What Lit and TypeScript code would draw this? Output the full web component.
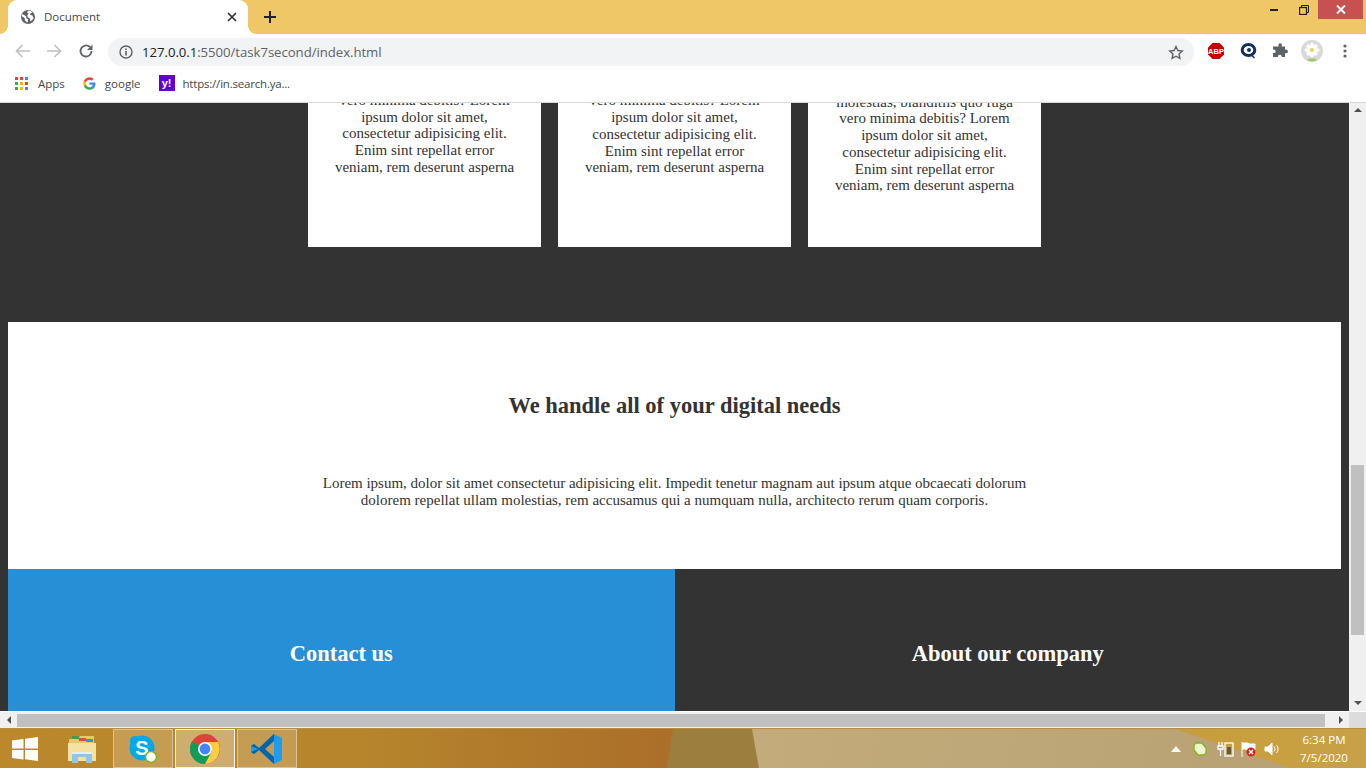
import { LitElement, html, css, svg } from "lit";
import { customElement } from "lit/decorators.js";

const globe = html`<svg width="16" height="16" viewBox="0 0 16 16"><circle cx="8" cy="8" r="7" fill="#5f6368"/><path d="M2.5 5 6 7.2l.6 2.3 1.6 1-.8 3.2L5 11.5 4.6 9 1.5 7zM8 1.5l2.6.4 2 1.7-1.8.6-1 1.6 2.6.6 1.2 2.8-1.8 2.4-1.5.6-.2-2.4-2.2-1.4-.6-2.2 1.4-1.6-1.6-.9z" fill="#fff"/></svg>`;
const googleG = html`<svg width="13" height="13" viewBox="0 0 24 24"><path fill="#4285f4" d="M23 12.3c0-.8-.1-1.600-.2-2.300H12v4.500h6.200c-.3 1.400-1.100 2.600-2.300 3.400v2.900h3.700c2.200-2 3.400-5 3.400-8.500z"/><path fill="#34a853" d="M12 23.500c3.100 0 5.700-1 7.600-2.800l-3.700-2.900c-1 .7-2.300 1.100-3.900 1.100-3 0-5.500-2-6.400-4.800H1.800v3A11.500 11.500 0 0 0 12 23.500z"/><path fill="#fbbc05" d="M5.600 14.100a6.900 6.900 0 0 1 0-4.300v-3H1.800a11.500 11.500 0 0 0 0 10.300z"/><path fill="#ea4335" d="M12 5c1.700 0 3.200.6 4.400 1.700l3.300-3.300A11.500 11.500 0 0 0 1.800 6.800l3.800 3C6.500 7 9 5 12 5z"/></svg>`;
const appsGrid = html`<svg width="13" height="13" viewBox="0 0 13 13">${[
  ["#ea4335", "#ea4335", "#4285f4"],
  ["#34a853", "#fbbc05", "#ea4335"],
  ["#34a853", "#fbbc05", "#4285f4"],
].map((row, y) => row.map((c, x) => svg`<rect x="${x * 5}" y="${y * 5}" width="3" height="3" fill="${c}"/>`))}</svg>`;

@customElement("app-root")
export class AppRoot extends LitElement {
  static styles = css`
    :host { display: block; width: 1366px; height: 768px; overflow: hidden; position: relative; }
    .win { display: flex; flex-direction: column; height: 768px; font-family: "Open Sans", "Noto Sans", sans-serif; }

    .titlebar { height: 34px; background: #f0c766; display: flex; align-items: flex-start; flex: none; }
    .tab { margin-left: 8px; width: 240px; height: 34px; background: #fff; border-radius: 9px 9px 0 0; display: flex; align-items: center; box-sizing: border-box; padding: 0 11px 0 12px; position: relative; }
    .tab::before, .tab::after { content: ""; position: absolute; bottom: 0; width: 8px; height: 8px; }
    .tab::before { left: -8px; background: radial-gradient(circle at 0 0, transparent 7.5px, #fff 8px); }
    .tab::after { right: -8px; background: radial-gradient(circle at 100% 0, transparent 7.5px, #fff 8px); }
    .tab-title { margin: -1px 0 0 8px; font-size: 11.5px; color: #45474a; flex: 1; }
    .plus { margin-left: 15px; margin-top: 10px; display: flex; }
    .spacer { flex: 1; }
    .winbtns { display: flex; height: 19px; margin-right: 3px; }
    .winbtn { width: 45px; height: 19px; display: flex; align-items: center; justify-content: center; }
    .winbtn.close { width: 45px; background: #c75050; }
    .winbtns .narrow { width: 29px; }

    .toolbar { height: 34px; background: #fff; display: flex; align-items: center; flex: none; padding-left: 15px; }
    .nav { display: flex; width: 32px; }
    .nav.fwd { width: 31px; }
    .reload { flex: none; }
    .omni { margin-left: 14px; margin-top: 2px; width: 1086px; height: 28px; border-radius: 14px; background: #f1f3f4; display: flex; align-items: center; box-sizing: border-box; padding: 0 10px 0 11px; }
    .url { margin-left: 9px; font-size: 13.2px; color: #5f6368; flex: 1; letter-spacing: -0.05px; }
    .url b { font-weight: 400; color: #202124; }
    .ext { display: flex; align-items: center; margin-left: 13px; }
    .ext > * { flex: none; }
    .abp { margin-right: 15px; }
    .q { margin-right: 14px; }
    .puzzle { margin-right: 13px; }
    .avatar { margin-right: 20px; }

    .bookmarks { background: #fff; border-bottom: 1px solid #d9d9d9; display: flex; align-items: center; flex: none; padding: 0 0 4px 15px; height: 30px; font-size: 11.5px; color: #45474a; }
    .bm { display: flex; align-items: center; }
    .bm span { margin-left: 10px; }
    .bm.g { margin-left: 18px; }
    .bm.g span { margin-left: 9px; }
    .bm.yh { margin-left: 18px; }
    .y { width: 16px; height: 16px; background: #6001d2; color: #fff; font: bold 11px "Liberation Sans", sans-serif; display: flex; align-items: center; justify-content: center; }
    .bm .y-label { margin-left: 8px; letter-spacing: -0.2px; }

    .view { flex: 1; min-height: 0; display: flex; }
    .page { flex: 1; min-width: 0; overflow: hidden; background: #333; font-family: "Liberation Serif", "Times New Roman", serif; color: #333; }
    .cards { display: flex; justify-content: center; gap: 17px; margin-top: -100px; }
    .card { width: 233px; height: 244px; background: #fff; box-sizing: border-box; padding: 0 24px; overflow: hidden; text-align: center; font-size: 15px; line-height: 16.75px; }
    .card p { margin: 0; padding-top: 72px; }
    .card.mid p { padding-top: 72.5px; }
    .card.tall p { padding-top: 90.5px; }
    .digital { margin: 75px 8px 0; width: 1333px; height: 247px; background: #fff; box-sizing: border-box; text-align: center; padding-top: 71px; }
    h2 { margin: 0; font-size: 22.5px; font-weight: 700; line-height: 26px; }
    .digital p { margin: 56px auto 0; width: 740px; font-size: 15px; line-height: 16.75px; }
    .split { display: flex; margin-left: 8px; width: 1333px; height: 142px; }
    .split > div { flex: 1; text-align: center; color: #fff; padding-top: 72px; }
    .blue { background: #268fd5; }
    .split h2 { color: #fff; }

    .vscroll { width: 17px; background: #f0f0f0; flex: none; display: flex; flex-direction: column; align-items: center; position: relative; }
    .vthumb { position: absolute; top: 362px; left: 2px; width: 13px; height: 170px; background: #c0c0c0; }
    .arrow-up { margin-top: 5px; width: 0; height: 0; border: 4px solid transparent; border-top: 0; border-bottom: 4px solid #505050; }
    .arrow-down { margin-top: auto; margin-bottom: 6px; width: 0; height: 0; border: 4px solid transparent; border-bottom: 0; border-top: 4px solid #505050; }

    .hscroll { height: 17px; flex: none; background: #f0f0f0; display: flex; align-items: center; border-top: 1px solid #fff; box-sizing: border-box; }
    .hbtn { width: 17px; display: flex; justify-content: center; }
    .arrow-left { width: 0; height: 0; border: 4px solid transparent; border-left: 0; border-right: 4px solid #505050; }
    .arrow-right { width: 0; height: 0; border: 4px solid transparent; border-right: 0; border-left: 4px solid #505050; }
    .hthumb { width: 1308px; height: 13px; background: #c0c0c0; }
    .hgap { width: 7px; }
    .corner { margin-left: auto; width: 17px; height: 16px; background: #dcdcdc; }

    .taskbar { height: 40px; flex: none; display: flex; align-items: stretch; border-top: 1px solid #b78f3c; box-sizing: border-box; position: relative; color: #fff;
      background: linear-gradient(90deg, #bb882c 0, #b6862c 350px, #ac6f2a 665px, #b98a33 900px, #c9a040 1250px, #c7a048 1366px);
    }
    .taskbar::before { content: ""; position: absolute; inset: 0; background: #9c7f3f; clip-path: polygon(673px 0, 753px 0, 760px 100%, 667px 100%); }
    .taskbar::after { content: ""; position: absolute; inset: 0; background: linear-gradient(100deg, #c3ab7b 752px, #b9a375 1200px); clip-path: polygon(752px 0, 1175px 0, 1290px 100%, 759px 100%); }
    .taskbar > * { position: relative; z-index: 1; }
    .start { width: 50px; display: flex; align-items: center; justify-content: center; }
    .folder { width: 63px; display: flex; align-items: center; justify-content: center; }
    .tb { width: 60px; margin-right: 2px; box-sizing: border-box; border: 1px solid rgba(255,255,255,0.4); background: rgba(255,255,255,0.18); display: flex; align-items: center; justify-content: center; }
    .tb.active { border-color: rgba(255,255,255,0.85); background: rgba(255,255,255,0.32); }
    .tray { margin-left: auto; display: flex; align-items: center; }
    .tray > svg { flex: none; }
    .t-up { margin-right: 12px; }
    .t-leaf { margin-right: 10px; }
    .t-pow { margin-right: 6px; }
    .t-flag { margin-right: 7px; }
    .clock { width: 64px; margin-left: 12px; margin-right: 10px; text-align: center; font-size: 11.5px; line-height: 18px; color: #fff; }
  `;

  render() {
    const t = "molestias, blanditiis quo fuga vero minima debitis? Lorem ipsum dolor sit amet, consectetur adipisicing elit. Enim sint repellat error veniam, rem deserunt asperna";
    return html`
      <div class="win">
        <div class="titlebar">
          <div class="tab">
            ${globe}
            <div class="tab-title">Document</div>
            <svg width="10" height="10" viewBox="0 0 10 10"><path d="M1 1l8 8M9 1l-8 8" stroke="#333" stroke-width="1.700"/></svg>
          </div>
          <div class="plus"><svg width="14" height="14" viewBox="0 0 14 14"><path d="M7 1v12M1 7h12" stroke="#202124" stroke-width="2"/></svg></div>
          <div class="spacer"></div>
          <div class="winbtns">
            <div class="winbtn narrow"><svg width="9" height="4" viewBox="0 0 9 4"><rect y="1" width="8" height="2" fill="#222"/></svg></div>
            <div class="winbtn narrow"><svg width="10" height="10" viewBox="0 0 10 10" fill="none" stroke="#222"><rect x="0.500" y="2.500" width="7" height="7" stroke-width="1.300"/><path d="M2.500 2V.500h7v7H8"/></svg></div>
            <div class="winbtn close"><svg width="10" height="9" viewBox="0 0 10 9"><path d="M1 .5l8 8M9 .5l-8 8" stroke="#fff" stroke-width="2"/></svg></div>
          </div>
        </div>

        <div class="toolbar">
          <div class="nav"><svg width="15" height="14" viewBox="0 0 15 14" fill="none" stroke="#bfc1c3" stroke-width="1.700"><path d="M15 7H1.500M7.500 1 1.500 7l6 6"/></svg></div>
          <div class="nav fwd"><svg width="15" height="14" viewBox="0 0 15 14" fill="none" stroke="#bfc1c3" stroke-width="1.700"><path d="M0 7h13.500M7.500 1l6 6-6 6"/></svg></div>
          <svg class="reload" width="16" height="16" viewBox="0 0 16 16"><path d="M13.500 8a5.500 5.500 0 1 1-1.600-3.900" fill="none" stroke="#5f6368" stroke-width="1.800"/><path d="M14.500 1.500v5.500H9z" fill="#5f6368"/></svg>
          <div class="omni">
            <svg width="14" height="14" viewBox="0 0 14 14"><circle cx="7" cy="7" r="6" fill="none" stroke="#5f6368" stroke-width="1.400"/><rect x="6.200" y="6" width="1.600" height="4.500" fill="#5f6368"/><rect x="6.200" y="3.500" width="1.600" height="1.600" fill="#5f6368"/></svg>
            <div class="url"><b>127.0.0.1</b>:5500/task7second/index.html</div>
            <svg width="16" height="15" viewBox="0 0 16 15"><path d="M8 1.500l1.900 4 4.400.5-3.300 3 .9 4.400L8 11.200l-3.900 2.200.9-4.400-3.300-3 4.400-.5z" fill="none" stroke="#5f6368" stroke-width="1.400"/></svg>
          </div>
          <div class="ext">
            <svg class="abp" width="18" height="18" viewBox="0 0 18 18"><path d="M5.500 1h7L17 5.500v7L12.500 17h-7L1 12.500v-7z" fill="#c80000"/><text x="9" y="11.800" text-anchor="middle" font-family="Liberation Sans" font-weight="700" font-size="7.500" fill="#fff">ABP</text></svg>
            <svg class="q" width="18" height="18" viewBox="0 0 18 18"><ellipse cx="8.500" cy="8" rx="6.300" ry="5.500" fill="none" stroke="#14305e" stroke-width="3"/><circle cx="9" cy="8" r="2" fill="#14305e"/><path d="M12 13.500l2.500 2.500" stroke="#14305e" stroke-width="1.500"/></svg>
            <svg class="puzzle" width="16" height="16" viewBox="0 0 16 16"><path d="M6.500 1.500a1.700 1.700 0 0 1 3.300 0V3.500h3.200v3h1a1.900 1.900 0 0 1 0 3.800h-1V14H9.600v-1a1.900 1.900 0 0 0-3.600 0v1H1v-3.900h1.200a1.900 1.900 0 0 0 0-3.700H1V3.500h5.500z" fill="#5f6368"/></svg>
            <svg class="avatar" width="22" height="22" viewBox="0 0 22 22"><circle cx="11" cy="11" r="11" fill="#d9d9d9"/><g fill="#fff"><ellipse cx="11" cy="6" rx="2" ry="3.500"/><ellipse cx="11" cy="14" rx="2" ry="3.500"/><ellipse cx="7" cy="10" rx="3.500" ry="2"/><ellipse cx="15" cy="10" rx="3.500" ry="2"/><ellipse cx="8" cy="7" rx="2" ry="3" transform="rotate(-45 8 7)"/><ellipse cx="14" cy="7" rx="2" ry="3" transform="rotate(45 14 7)"/><ellipse cx="8" cy="13" rx="2" ry="3" transform="rotate(45 8 13)"/><ellipse cx="14" cy="13" rx="2" ry="3" transform="rotate(-45 14 13)"/></g><circle cx="11" cy="10" r="2" fill="#f2cf5a"/><path d="M6 20c2-2 8-2 10 0a11 11 0 0 1-10 0z" fill="#9cc46a"/></svg>
            <svg width="4" height="14" viewBox="0 0 4 14" fill="#5f6368"><circle cx="2" cy="2" r="1.600"/><circle cx="2" cy="7" r="1.600"/><circle cx="2" cy="12" r="1.600"/></svg>
          </div>
        </div>

        <div class="bookmarks">
          <div class="bm">${appsGrid}<span>Apps</span></div>
          <div class="bm g">${googleG}<span>google</span></div>
          <div class="bm yh"><div class="y">y!</div><span class="y-label">https://in.search.ya...</span></div>
        </div>

        <div class="view">
          <div class="page">
            <div class="cards">
              <div class="card"><p>${t}</p></div>
              <div class="card mid"><p>${t}</p></div>
              <div class="card tall"><p>${t}</p></div>
            </div>
            <div class="digital">
              <h2>We handle all of your digital needs</h2>
              <p>Lorem ipsum, dolor sit amet consectetur adipisicing elit. Impedit tenetur magnam aut ipsum atque obcaecati dolorum dolorem repellat ullam molestias, rem accusamus qui a numquam nulla, architecto rerum quam corporis.</p>
            </div>
            <div class="split">
              <div class="blue"><h2>Contact us</h2></div>
              <div><h2>About our company</h2></div>
            </div>
          </div>
          <div class="vscroll">
            <div class="arrow-up"></div>
            <div class="vthumb"></div>
            <div class="arrow-down"></div>
          </div>
        </div>

        <div class="hscroll">
          <div class="hbtn"><div class="arrow-left"></div></div>
          <div class="hthumb"></div>
          <div class="hgap"></div>
          <div class="hbtn"><div class="arrow-right"></div></div>
          <div class="corner"></div>
        </div>

        <div class="taskbar">
          <div class="start"><svg width="28" height="26" viewBox="0 0 28 26" fill="#fff"><path d="M1 4.500 12.500 3v9.500H1zM14 2.700 27 1v11.500H14zM1 14h11.500v9.500L1 22zM14 14h13v11l-13-1.700z"/></svg></div>
          <div class="folder"><svg width="32" height="30" viewBox="0 0 32 30"><path d="M3 5h9l2-3h14v24H3z" fill="#e9c86d"/><rect x="6" y="2" width="7" height="3" fill="#3aa14c"/><rect x="13" y="4" width="7" height="3" fill="#d6523c"/><rect x="20" y="5" width="7" height="3" fill="#3f8ed8"/><path d="M2 9h28v18H2z" fill="#f4e2a3"/><path d="M6 18h20v11h-6v-6h-8v6H6z" fill="#8fc6ea"/><path d="M6 18h20v2H6z" fill="#dff1fb"/></svg></div>
          <div class="tb"><svg width="30" height="30" viewBox="0 0 30 30"><circle cx="14" cy="14" r="12.500" fill="#00a9e8"/><rect x="2" y="2" width="10" height="10" rx="5" fill="#00a9e8"/><text x="14" y="21" text-anchor="middle" font-family="Liberation Sans" font-weight="700" font-size="20" fill="#fff">S</text><circle cx="23" cy="23" r="5.500" fill="#fff" stroke="#7fb51d" stroke-width="1.500"/></svg></div>
          <div class="tb active"><svg width="30" height="30" viewBox="0 0 30 30"><circle cx="15" cy="15" r="15" fill="#db4437"/><path d="M15 15 2 7.500A15 15 0 0 0 15 30l7.500-13z" fill="#0f9d58"/><path d="M15 8h13a15 15 0 0 1-13 22l7-13z" fill="#ffcd40"/><circle cx="15" cy="15" r="7" fill="#fff"/><circle cx="15" cy="15" r="5.400" fill="#4285f4"/></svg></div>
          <div class="tb"><svg width="32" height="32" viewBox="0 0 32 32"><path d="M23 1 31 5v22l-8 4L8 17l-5 4-3-2v-6l3-2 5 4z" fill="#1f9cf0"/><path d="M23 1v30L8 17l-5 4-3-2 7-3-7-3 3-2 5 4z" fill="#0065a9"/><path d="M23 8v16l-9-8z" fill="#c29a52"/></svg></div>
          <div class="tray">
            <svg class="t-up" width="10" height="6" viewBox="0 0 10 6"><path d="M5 0l5 6H0z" fill="#fff"/></svg>
            <svg class="t-leaf" width="14" height="14" viewBox="0 0 14 14"><path d="M3 1h6l4 5v5l-2 2H5L1 8V3z" fill="#eef7d0" stroke="#7fb51d" stroke-width="1.300"/></svg>
            <svg class="t-pow" width="17" height="16" viewBox="0 0 17 16" fill="none" stroke="#fff"><path d="M2 1v4M5 1v4M1 5h5v3H1zM3.500 8v7" stroke-width="1.300"/><rect x="8" y="2" width="8" height="13" stroke-width="1.300"/><rect x="10" y="6" width="4" height="7" fill="#6b5a30" stroke="none"/></svg>
            <svg class="t-flag" width="17" height="16" viewBox="0 0 17 16"><path d="M2 1v15M2 2h6l1 1h6v6H7L6 8H2" fill="#fff" stroke="#fff"/><circle cx="11" cy="11" r="4.500" fill="#d6262b"/><path d="M9 9l4 4M13 9l-4 4" stroke="#fff" stroke-width="1.300"/></svg>
            <svg width="16" height="14" viewBox="0 0 16 14" fill="none" stroke="#fff"><path d="M1 5h3l4-4v12l-4-4H1z" fill="#fff"/><path d="M10 4.500c1.300 1.500 1.300 3.500 0 5M12.500 3c2 2.500 2 5.500 0 8"/></svg>
            <div class="clock">6:34 PM<br />7/5/2020</div>
          </div>
        </div>
      </div>
    `;
  }
}
